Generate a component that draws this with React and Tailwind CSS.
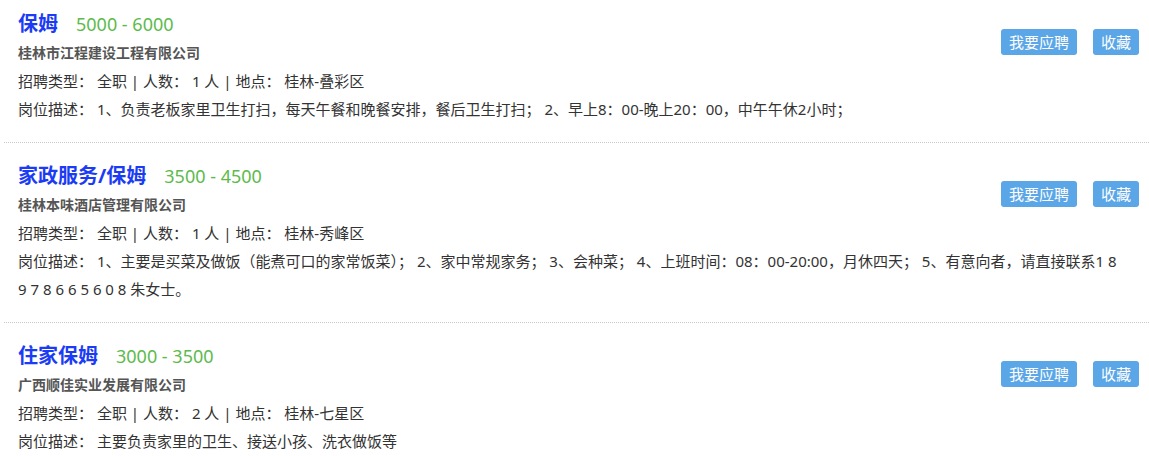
import React from 'react';

const jobs = [
    {
        id: 1,
        title: '保姆',
        salary: '5000 - 6000',
        company: '桂林市江程建设工程有限公司',
        count: 1,
        location: '桂林-叠彩区',
        desc: '1、负责老板家里卫生打扫，每天午餐和晚餐安排，餐后卫生打扫； 2、早上8：00-晚上20：00，中午午休2小时；'
    },
    {
        id: 2,
        title: '家政服务/保姆',
        salary: '3500 - 4500',
        company: '桂林本味酒店管理有限公司',
        count: 1,
        location: '桂林-秀峰区',
        desc: '1、主要是买菜及做饭（能煮可口的家常饭菜）； 2、家中常规家务； 3、会种菜； 4、上班时间：08：00-20:00，月休四天； 5、有意向者，请直接联系1 8 9 7 8 6 6 5 6 0 8 朱女士。'
    },
    {
        id: 3,
        title: '住家保姆',
        salary: '3000 - 3500',
        company: '广西顺佳实业发展有限公司',
        count: 2,
        location: '桂林-七星区',
        desc: '主要负责家里的卫生、接送小孩、洗衣做饭等'
    }
];

const JobItem = ({ job, first }) => (
    <div
        className={`pl-[14px] pr-[10px] pb-[19px] border-b border-dotted border-[#c8c8c8] ${
            first ? 'pt-[9px]' : 'pt-[18px]'
        }`}
    >
        <div className="float-right mt-[20px] flex gap-[16px]">
            <button className="h-[26px] px-[8px] rounded-[3px] bg-[#5ba6e6] text-white text-[15px] leading-[26px]">
                我要应聘
            </button>
            <button className="h-[26px] px-[8px] rounded-[3px] bg-[#5ba6e6] text-white text-[15px] leading-[26px]">
                收藏
            </button>
        </div>
        <div className="h-[30px] leading-[30px] flex items-baseline">
            <span className="text-[20px] font-bold text-[#1b3cf4]">{job.title}</span>
            <span className="ml-[18px] text-[18px] text-[#5cbb4c]">{job.salary}</span>
        </div>
        <div className="leading-[28px] text-[14px] font-bold text-[#555]">{job.company}</div>
        <div className="leading-[28px] text-[15px] text-[#333]">
            招聘类型： 全职 | 人数： {job.count} 人 | 地点： {job.location}
        </div>
        <div className="leading-[28px] text-[15px] text-[#333] pr-[18px]">
            岗位描述： {job.desc}
        </div>
    </div>
);

const App = () => {
    return (
        <div
            className="min-h-screen bg-white pl-[4px]"
            style={{ fontFamily: '"Noto Sans", "Noto Sans CJK SC", sans-serif' }}
        >
            {jobs.map((job, i) => (
                <JobItem key={job.id} job={job} first={i === 0} />
            ))}
        </div>
    );
};

export default App;
